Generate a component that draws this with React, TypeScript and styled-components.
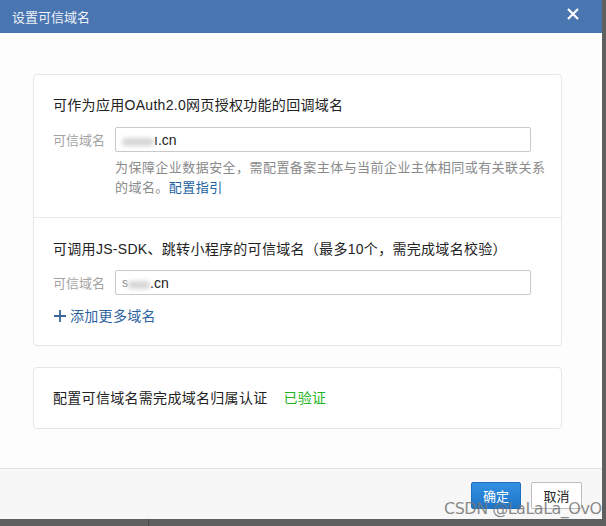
import React from 'react';
import styled, { createGlobalStyle } from 'styled-components';

const GlobalStyle = createGlobalStyle`
  html, body {
    margin: 0;
    padding: 0;
    background: #5f5f5f;
  }
  body {
    font-family: "Liberation Sans", "Noto Sans CJK SC", sans-serif;
    width: 606px;
    height: 526px;
    overflow: hidden;
  }
`;

const Page = styled.div`
  position: relative;
  width: 606px;
  height: 526px;
  display: flex;
  flex-direction: column;
`;

const Dialog = styled.div`
  width: 602px;
  height: 519px;
  display: flex;
  flex-direction: column;
  background: #fdfdfd;
`;

const Header = styled.div`
  height: 33px;
  flex-shrink: 0;
  background: #4975b1;
  display: flex;
  align-items: center;
  justify-content: space-between;
  padding: 0 22px 0 12px;
  color: #eef2f8;
  font-size: 13px;
`;

const CloseBtn = styled.button`
  border: 0;
  background: none;
  padding: 0;
  width: 14px;
  height: 14px;
  display: flex;
  cursor: pointer;
  margin-top: -5px;
`;

const Body = styled.div`
  flex: 1;
  padding: 41px 40px 0 33px;
  display: flex;
  flex-direction: column;
  gap: 21px;
`;

const Card = styled.div`
  background: #fff;
  border: 1px solid #e5e6ea;
  border-radius: 4px;
`;

const Section = styled.div<{ $top?: number; $bottom?: number }>`
  padding: ${(p) => p.$top ?? 20}px 16px ${(p) => p.$bottom ?? 19}px 19px;
  & + & {
    border-top: 1px solid #e8e9ec;
  }
`;

const Title = styled.div`
  font-size: 14px;
  line-height: 20px;
  color: #222;
  letter-spacing: 0.3px;
`;

const FieldRow = styled.div<{ $mt: number }>`
  display: flex;
  align-items: center;
  margin-top: ${(p) => p.$mt}px;
`;

const Label = styled.span`
  width: 62px;
  font-size: 13px;
  color: #a3a3a3;
  flex-shrink: 0;
`;

const Input = styled.div`
  width: 416px;
  height: 25px;
  box-sizing: border-box;
  border: 1px solid #c9c9c9;
  border-radius: 2px;
  background: #fff;
  display: flex;
  align-items: center;
  padding-left: 6px;
  font-size: 14px;
  color: #222;
`;

const Blur = styled.span<{ $w: number }>`
  display: inline-block;
  width: ${(p) => p.$w}px;
  height: 8px;
  margin-top: 4px;
  background: #d6d6d6;
  border-radius: 4px;
  filter: blur(2px);
`;

const Faint = styled.span`
  color: #888;
  font-size: 12px;
`;

const Help = styled.div`
  margin: 6px 0 0 62px;
  font-size: 13px;
  letter-spacing: 0.45px;
  line-height: 20px;
  color: #8a8a8a;
  white-space: nowrap;
`;

const Link = styled.a`
  color: #1d5f9f;
  text-decoration: none;
  cursor: pointer;
`;

const AddMore = styled.div`
  margin-top: 11px;
  display: flex;
  align-items: center;
  gap: 3px;
  font-size: 14px;
  line-height: 20px;
  color: #2d63a0;
  letter-spacing: 0.3px;
  cursor: pointer;
`;

const Notice = styled.div`
  padding: 20px 19px 19px;
  font-size: 14px;
  line-height: 21px;
  color: #222;
  display: flex;
  gap: 16px;
  letter-spacing: 0.3px;
`;

const Verified = styled.span`
  color: #1fb51f;
`;

const Footer = styled.div`
  height: 51px;
  flex-shrink: 0;
  box-sizing: border-box;
  border-top: 1px solid #e2e2e2;
  background: #f7f7f7;
  display: flex;
  justify-content: flex-end;
  align-items: flex-start;
  gap: 10px;
  padding: 13px 20px 0 0;
`;

const Button = styled.button<{ $primary?: boolean }>`
  height: 27px;
  width: ${(p) => (p.$primary ? 50 : 51)}px;
  box-sizing: border-box;
  border-radius: 2px;
  font-size: 13px;
  font-family: "Liberation Sans", "Noto Sans CJK SC", sans-serif;
  cursor: pointer;
  border: 1px solid ${(p) => (p.$primary ? '#1c6fc0' : '#bdbdbd')};
  background: ${(p) => (p.$primary ? 'linear-gradient(#3391e2, #1f75c8)' : '#fff')};
  color: ${(p) => (p.$primary ? '#fff' : '#222')};
`;

const BottomStrip = styled.div`
  flex: 1;
  display: flex;
`;

const StripPart = styled.div<{ $w?: number }>`
  width: ${(p) => (p.$w ? `${p.$w}px` : 'auto')};
  flex: ${(p) => (p.$w ? '0 0 auto' : 1)};
  & + & {
    border-left: 1px solid #4a4a4a;
  }
`;

const Watermark = styled.div`
  position: absolute;
  left: 444px;
  top: 499px;
  white-space: nowrap;
  font-size: 16px;
  line-height: 20px;
  color: rgba(118, 118, 118, 0.85);
  font-family: "DejaVu Sans", "Liberation Sans", sans-serif;
  letter-spacing: -0.5px;
  pointer-events: none;
`;

const App = () => {
  return (
    <>
      <GlobalStyle />
      <Page>
        <Dialog>
          <Header>
            <span>设置可信域名</span>
            <CloseBtn aria-label="关闭">
              <svg width="14" height="14" viewBox="0 0 14 14">
                <path d="M2 2 L12 12 M12 2 L2 12" stroke="#fff" strokeWidth="2.2" />
              </svg>
            </CloseBtn>
          </Header>

          <Body>
            <Card>
              <Section $top={20} $bottom={19}>
                <Title>可作为应用OAuth2.0网页授权功能的回调域名</Title>
                <FieldRow $mt={12}>
                  <Label>可信域名</Label>
                  <Input>
                    <Blur $w={32} />
                    <span>ı.cn</span>
                  </Input>
                </FieldRow>
                <Help>
                  为保障企业数据安全，需配置备案主体与当前企业主体相同或有关联关系
                  <br />
                  的域名。<Link>配置指引</Link>
                </Help>
              </Section>
              <Section $top={21} $bottom={19}>
                <Title>可调用JS-SDK、跳转小程序的可信域名（最多10个，需完成域名校验）</Title>
                <FieldRow $mt={11}>
                  <Label>可信域名</Label>
                  <Input>
                    <Faint>s</Faint>
                    <Blur $w={22} />
                    <span>.cn</span>
                  </Input>
                </FieldRow>
                <AddMore>
                  <svg width="14" height="14" viewBox="0 0 14 14">
                    <path d="M7 1 V13 M1 7 H13" stroke="#3a6699" strokeWidth="1.8" />
                  </svg>
                  添加更多域名
                </AddMore>
              </Section>
            </Card>

            <Card>
              <Notice>
                <span>配置可信域名需完成域名归属认证</span>
                <Verified>已验证</Verified>
              </Notice>
            </Card>
          </Body>

          <Footer>
            <Button $primary>确定</Button>
            <Button>取消</Button>
          </Footer>
        </Dialog>
        <BottomStrip>
          <StripPart $w={148} />
          <StripPart />
        </BottomStrip>
        <Watermark>CSDN @LaLaLa_OvO</Watermark>
      </Page>
    </>
  );
};

export default App;
